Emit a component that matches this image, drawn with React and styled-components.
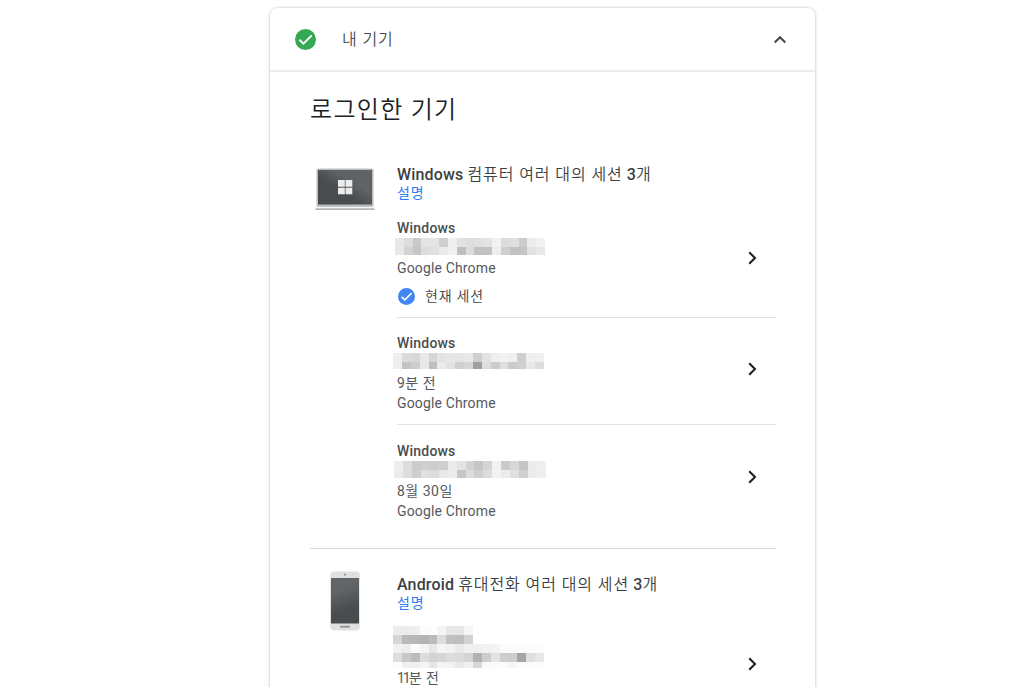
import React from 'react'
import styled, { createGlobalStyle } from 'styled-components'

const GlobalStyle = createGlobalStyle`
  html, body {
    margin: 0;
    height: 100%;
    overflow: hidden;
    background: #fff;
  }
  * {
    box-sizing: border-box;
  }
`

const Page = styled.main`
  display: flex;
  justify-content: center;
  height: 687px;
  padding: 8px 0 0 61px;
  overflow: hidden;
  font-family: Roboto, 'Noto Sans CJK KR', sans-serif;
  color: #3c4043;
`

const Card = styled.section`
  flex: none;
  width: 545px;
  height: 760px;
  border-radius: 8px;
  background: #fff;
  box-shadow: 0 0 2px 1px rgba(60, 64, 67, 0.15), 0 1px 3px 1px rgba(60, 64, 67, 0.06);
`

const Header = styled.header`
  display: flex;
  align-items: center;
  height: 64px;
  padding: 1px 28px 0 25px;
  border-bottom: 2px solid #ebecec;
`

const HeaderTitle = styled.span`
  flex: 1;
  margin-left: 26px;
  font-size: 16px;
  font-weight: 350;
  line-height: 24px;
  letter-spacing: 0.9px;
  color: #4a4d50;
`

const Content = styled.div`
  padding: 19px 39px 0 40px;
`

const Title = styled.h2`
  margin: 0;
  padding-top: 1px;
  font-size: 24px;
  font-weight: 350;
  line-height: 36px;
  letter-spacing: 1.3px;
  color: #202124;
`

const Group = styled.div`
  display: grid;
  grid-template-columns: 70px 1fr;
  column-gap: 17px;
  height: ${props => props.$height}px;
  padding-top: ${props => props.$top}px;
  border-bottom: 1px solid #dadce0;
`

const DeviceImage = styled.div`
  display: flex;
  justify-content: center;
  align-items: flex-start;
  margin-top: ${props => props.$offset}px;
`

const GroupTitle = styled.h3`
  margin: 0;
  font-size: 16px;
  font-weight: 500;
  line-height: 19px;
  letter-spacing: 0.15px;
  color: #3c3f42;
  white-space: nowrap;
`

const Korean = styled.span`
  font-weight: 350;
  letter-spacing: 0.92px;
`

const HelpLink = styled.a`
  display: block;
  margin-bottom: 1px;
  font-size: 14px;
  font-weight: 400;
  line-height: 18px;
  letter-spacing: 0.8px;
  color: #2b7bf3;
`

const SessionRow = styled.div`
  display: flex;
  align-items: center;
  justify-content: space-between;
  height: ${props => props.$height}px;
  padding-bottom: 4px;
  border-bottom: ${props => (props.$last ? 'none' : '1px solid #dfe1e3')};
`

const SessionText = styled.div`
  display: flex;
  flex-direction: column;
  align-self: flex-start;
  padding-top: ${props => props.$top || 15}px;
`

const SessionName = styled.span`
  font-size: 14px;
  font-weight: 500;
  line-height: 20px;
  letter-spacing: 0.2px;
  color: #4a4d50;
`

const Line = styled.span`
  font-size: 14px;
  line-height: 20px;
  letter-spacing: ${props => props.$spacing || 0}px;
  color: #55595c;
`

const Current = styled.div`
  display: flex;
  align-items: center;
  gap: 10px;
  margin: 8px 0 0 1px;
  font-size: 14px;
  font-weight: 350;
  line-height: 20px;
  letter-spacing: 0.8px;
`

const Chevron = styled.div`
  display: flex;
  margin-right: 18px;
`

const Mosaic = styled.div`
  display: grid;
  grid-template-columns: repeat(${props => props.$columns}, 1fr);
  grid-auto-rows: 9px;
  width: ${props => props.$width}px;
  height: ${props => props.$height}px;
  margin: ${props => props.$margin};
  overflow: hidden;
`

const Cell = styled.i`
  background: ${props => '#' + props.$tone.repeat(3)};
`

// each row is a list of two digit grey tones
const Redacted = ({ rows, width, height, margin }) => {
  const cells = rows.map(row => row.split(' '))
  return (
    <Mosaic $columns={cells[0].length} $width={width} $height={height} $margin={margin}>
      {cells.flat().map((tone, i) => <Cell key={i} $tone={tone} />)}
    </Mosaic>
  )
}

const CheckCircle = ({ size, color }) => (
  <svg width={size} height={size} viewBox="0 0 20 20">
    <circle cx="10" cy="10" r="10" fill={color} />
    <path d="M4.2 10.2 8 14 16 6" fill="none" stroke="#fff" strokeWidth="1.8" />
  </svg>
)

const Arrow = () => (
  <Chevron>
    <svg width="12" height="14" viewBox="0 0 12 14">
      <path d="M3.2 1.2 9 7 3.2 12.8" fill="none" stroke="#202124" strokeWidth="2.1" />
    </svg>
  </Chevron>
)

const Laptop = () => (
  <svg width="60" height="42" viewBox="0 0 60 42">
    <defs>
      <linearGradient id="screen" x1="0" y1="1" x2="1" y2="0">
        <stop offset="0.4" stopColor="#484c4f" />
        <stop offset="0.65" stopColor="#5f6366" />
      </linearGradient>
    </defs>
    <rect x="1.5" y="0.5" width="57" height="38.5" rx="1.5" fill="#b9bbbc" />
    <rect x="3" y="2" width="54" height="34.5" fill="url(#screen)" />
    <path d="M23 12h6.800v6.800H23zM30.500 12h6.800v6.800h-6.800zM23 19.700h6.800v6.600H23zM30.500 19.700h6.800v6.600h-6.800z" fill="#ececec" />
    <rect x="0" y="38.8" width="60" height="1.5" fill="#f6f6f6" />
    <rect x="0.5" y="40.3" width="59" height="1.7" fill="#b0b2b3" />
  </svg>
)

const Phone = () => (
  <svg width="30" height="60" viewBox="0 0 30 60">
    <defs>
      <linearGradient id="glass" x1="0" y1="0" x2="0.2" y2="1">
        <stop offset="0.3" stopColor="#616568" />
        <stop offset="0.8" stopColor="#484c4f" />
      </linearGradient>
    </defs>
    <rect x="0.2" y="0.5" width="29.6" height="59" rx="4" fill="#dfe0e0" />
    <rect x="1" y="7" width="28" height="45.5" fill="url(#glass)" />
    <circle cx="15" cy="3.8" r="1" fill="#8b8d8f" />
    <rect x="10" y="54.8" width="10" height="1.9" rx="0.8" fill="#96999b" />
  </svg>
)

const windowsSessions = [
  {
    height: 115,
    current: true,
    redacted: {
      width: 150,
      height: 17,
      margin: '0 0 3px -2px',
      rows: [
        'e7 dc c9 e4 e5 cf ef e1 dd df e3 f1 dc e0 cb ed f2',
        'e8 d2 c6 dd e0 eb f1 bf dc c2 c2 ee cf c2 c5 e1 e8'
      ]
    }
  },
  {
    height: 107,
    time: '9분 전',
    redacted: {
      width: 151,
      height: 16,
      margin: '0 0 4px -4px',
      rows: [
        'ee dc d8 e8 d5 e3 e6 e5 e8 cf e3 ef f1 ef cf ef f0',
        'ee c4 cd e8 bf ea e1 d0 d6 9f dd cd df ca cf e7 dd'
      ]
    }
  },
  {
    height: 107,
    top: 16,
    time: '8월 30일',
    last: true,
    redacted: {
      width: 152,
      height: 17,
      margin: '0 0 3px -3px',
      rows: [
        'ee de cc cf cd cf ea e4 d3 c6 d5 f2 cb d8 c4 ec ef',
        'eb dd ce df dc e8 ec c7 dc ce dc f2 eb df cf eb ef'
      ]
    }
  }
]

const phoneMosaic = [
  'ed ec ee fb fd f5 e7 e7 f5 ff ff ff ff ff ff ff ff',
  'd5 b9 b7 b4 bb dd c1 be d2 ff ff ff ff ff ff ff ff',
  'f1 ee fc f5 e7 f5 f2 e9 f0 f0 f2 f3 fb fb fb fb fb',
  'dd c8 bc dc d4 d6 dc db d4 b2 cd e3 ce cd a5 df e7',
  'fd f0 ef f5 e6 f5 f2 e8 f0 d7 fb fa fb f6 fb fb fb'
]

const App = () => (
  <>
    <GlobalStyle />
    <Page>
      <Card>
        <Header>
          <CheckCircle size={21} color="#34a853" />
          <HeaderTitle>내 기기</HeaderTitle>
          <svg width="14" height="10" viewBox="0 0 14 10">
            <path d="M1.7 7.5 7 2.2 12.3 7.5" fill="none" stroke="#444746" strokeWidth="2" />
          </svg>
        </Header>
        <Content>
          <Title>로그인한 기기</Title>

          <Group $height={421} $top={37}>
            <DeviceImage $offset={3}><Laptop /></DeviceImage>
            <div>
              <GroupTitle>Windows <Korean>컴퓨터 여러 대의 세션</Korean> 3<Korean>개</Korean></GroupTitle>
              <HelpLink>설명</HelpLink>
              {windowsSessions.map((session, i) => (
                <SessionRow key={i} $height={session.height} $last={session.last}>
                  <SessionText $top={session.top}>
                    <SessionName>Windows</SessionName>
                    <Redacted {...session.redacted} />
                    {session.time && <Line $spacing={0.5}>{session.time}</Line>}
                    <Line $spacing={0.15}>Google Chrome</Line>
                    {session.current && (
                      <Current>
                        <CheckCircle size={17} color="#4285f4" />
                        현재 세션
                      </Current>
                    )}
                  </SessionText>
                  <Arrow />
                </SessionRow>
              ))}
            </div>
          </Group>

          <Group $height={220} $top={26}>
            <DeviceImage $offset={-4}><Phone /></DeviceImage>
            <div>
              <GroupTitle>Android <Korean>휴대전화 여러 대의 세션</Korean> 3<Korean>개</Korean></GroupTitle>
              <HelpLink>설명</HelpLink>
              <SessionRow $height={106} $last>
                <SessionText $top={13}>
                  <Redacted rows={phoneMosaic} width={151} height={42} margin="0 0 0 -4px" />
                  <Line $spacing={0.5}><Line $spacing={-2}>11</Line>분 전</Line>
                </SessionText>
                <Arrow />
              </SessionRow>
            </div>
          </Group>
        </Content>
      </Card>
    </Page>
  </>
)

export default App
